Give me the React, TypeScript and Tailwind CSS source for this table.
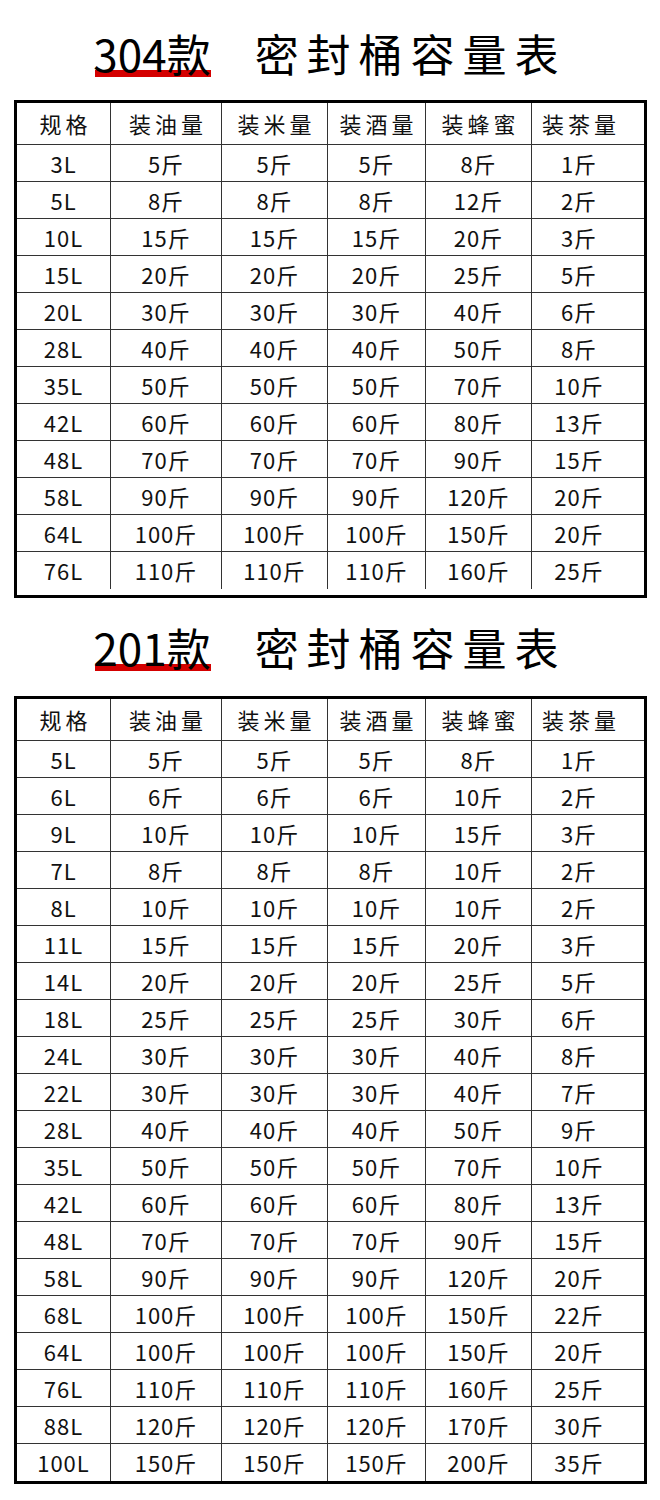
import React from "react";

const headers = ["规格", "装油量", "装米量", "装酒量", "装蜂蜜", "装茶量"];

const t1: string[][] = [
  ["3L", "5", "5", "5", "8", "1"],
  ["5L", "8", "8", "8", "12", "2"],
  ["10L", "15", "15", "15", "20", "3"],
  ["15L", "20", "20", "20", "25", "5"],
  ["20L", "30", "30", "30", "40", "6"],
  ["28L", "40", "40", "40", "50", "8"],
  ["35L", "50", "50", "50", "70", "10"],
  ["42L", "60", "60", "60", "80", "13"],
  ["48L", "70", "70", "70", "90", "15"],
  ["58L", "90", "90", "90", "120", "20"],
  ["64L", "100", "100", "100", "150", "20"],
  ["76L", "110", "110", "110", "160", "25"],
];

const t2: string[][] = [
  ["5L", "5", "5", "5", "8", "1"],
  ["6L", "6", "6", "6", "10", "2"],
  ["9L", "10", "10", "10", "15", "3"],
  ["7L", "8", "8", "8", "10", "2"],
  ["8L", "10", "10", "10", "10", "2"],
  ["11L", "15", "15", "15", "20", "3"],
  ["14L", "20", "20", "20", "25", "5"],
  ["18L", "25", "25", "25", "30", "6"],
  ["24L", "30", "30", "30", "40", "8"],
  ["22L", "30", "30", "30", "40", "7"],
  ["28L", "40", "40", "40", "50", "9"],
  ["35L", "50", "50", "50", "70", "10"],
  ["42L", "60", "60", "60", "80", "13"],
  ["48L", "70", "70", "70", "90", "15"],
  ["58L", "90", "90", "90", "120", "20"],
  ["68L", "100", "100", "100", "150", "22"],
  ["64L", "100", "100", "100", "150", "20"],
  ["76L", "110", "110", "110", "160", "25"],
  ["88L", "120", "120", "120", "170", "30"],
  ["100L", "150", "150", "150", "200", "35"],
];

const FONT = "font-['Noto_Sans_CJK_SC','Noto_Sans',sans-serif]";

function Title({ code, h, pt }: { code: string; h: string; pt: string }) {
  return (
    <div className={`flex items-center justify-center ${h} ${pt}`}>
      <div className="flex items-center text-[44px] leading-none text-black">
        <span className="relative inline-block">
          <span className="absolute left-[2px] right-0 bottom-[-2px] h-[7px] bg-[#d40000]" />
          <span className="relative">{code}款</span>
        </span>
        <span className="ml-[44px] tracking-[8px]">密封桶容量表</span>
      </div>
    </div>
  );
}

function Table({ rows, lastTall }: { rows: string[][]; lastTall?: boolean }) {
  return (
    <div className="mx-[14px] w-[633px] border-[3px] border-black">
      <div className="grid grid-cols-[94px_111px_106px_98px_106px_1fr] h-[42px] border-b border-[#333]">
        {headers.map((h, i) => (
          <div
            key={i}
            className={`flex items-center justify-center text-[22px] tracking-[4px] text-[#111] ${
              i < 5 ? "border-r border-[#333] pl-[4px]" : "pr-[14px]"
            }`}
          >
            {h}
          </div>
        ))}
      </div>
      {rows.map((r, ri) => (
        <div
          key={ri}
          className={`grid grid-cols-[94px_111px_106px_98px_106px_1fr] ${
            ri < rows.length - 1 ? "h-[37px] border-b border-[#333]" : lastTall ? "h-[43px] pb-[6px]" : "h-[37px]"
          }`}
        >
          {r.map((c, ci) => (
            <div
              key={ci}
              className={`flex items-center justify-center text-[22px] tracking-[1px] text-[#111] ${
                ci < 5 ? "border-r border-[#333]" : "pr-[18px]"
              }`}
            >
              {ci === 0 ? c : `${c}斤`}
            </div>
          ))}
        </div>
      ))}
    </div>
  );
}

export default function App() {
  return (
    <div className={`w-[660px] h-[1500px] bg-white ${FONT}`}>
      <Title code="304" h="h-[100px]" pt="pt-[6px]" />
      <Table rows={t1} lastTall />
      <Title code="201" h="h-[98px]" pt="pt-[0px]" />
      <Table rows={t2} />
    </div>
  );
}
